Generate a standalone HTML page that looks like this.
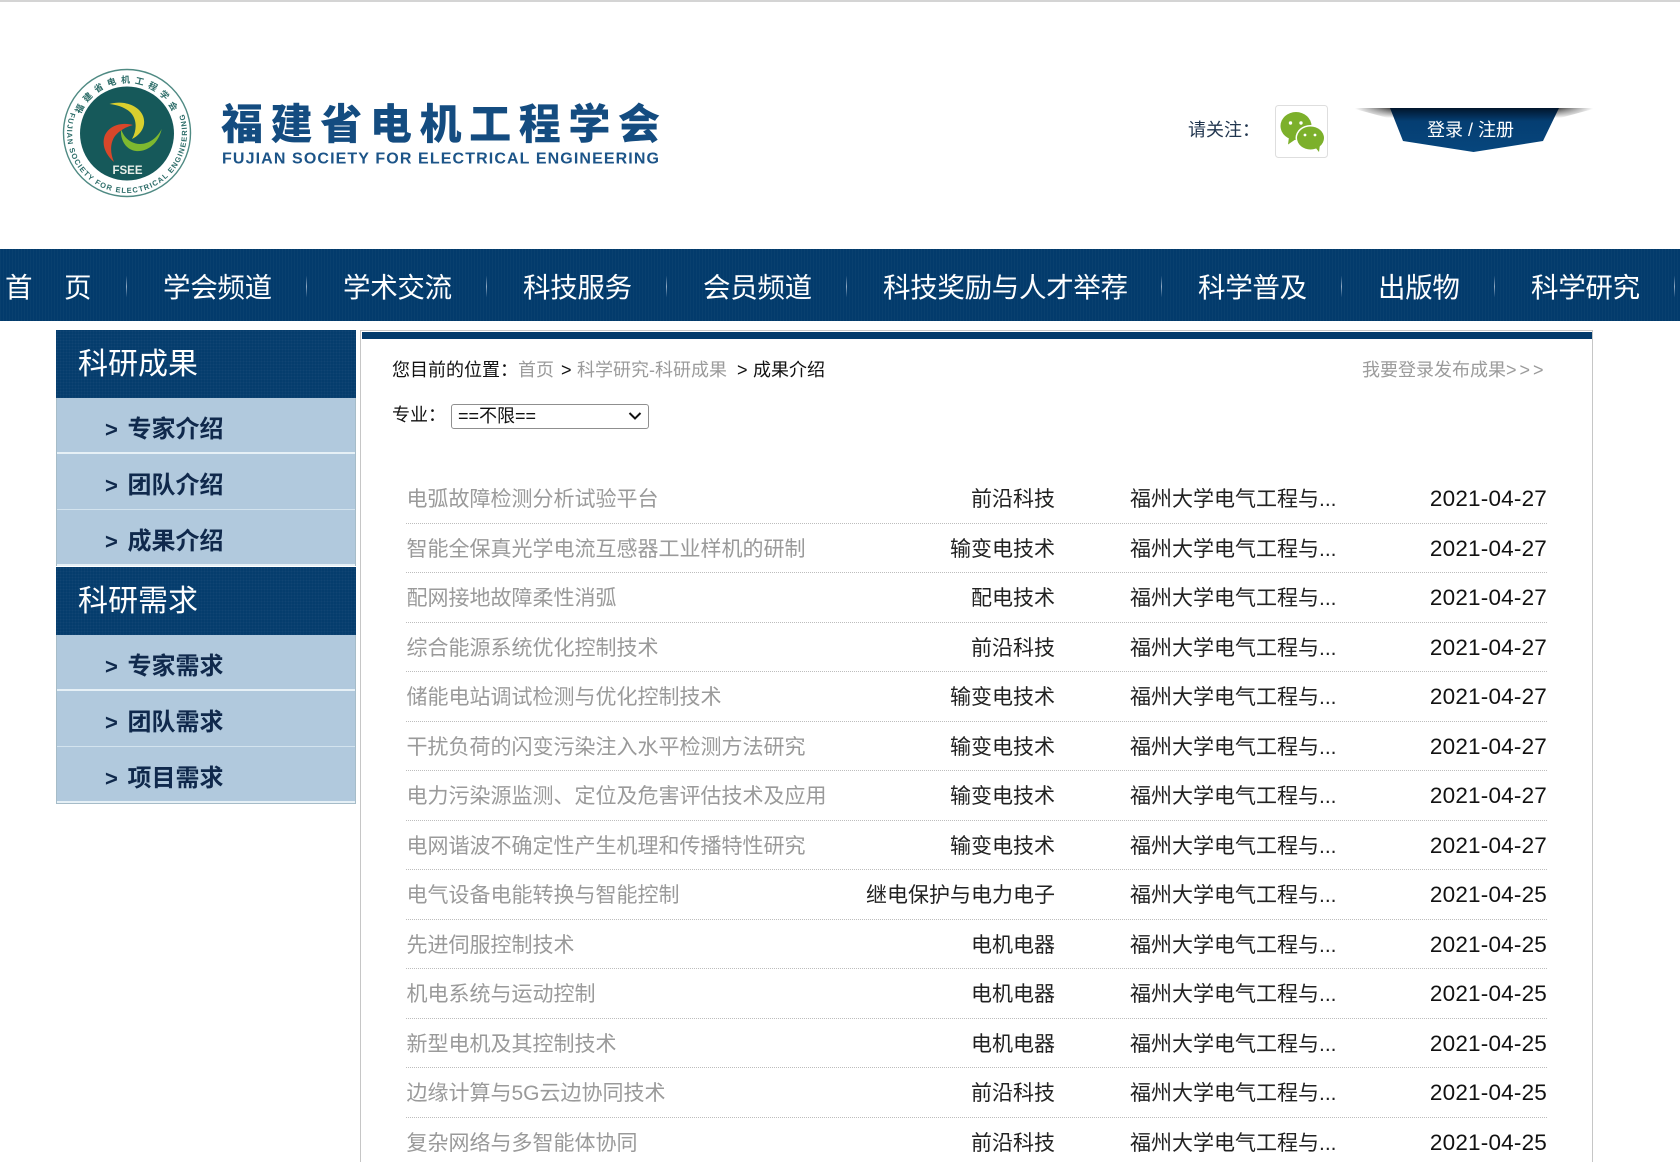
<!DOCTYPE html>
<html lang="zh-CN"><head><meta charset="utf-8"><title>成果介绍</title>
<style>
html,body{margin:0;padding:0;background:#fff;width:1680px;height:1162px;overflow:hidden}
#wrap{position:relative;width:1680px;height:1162px;overflow:hidden;font-family:"Liberation Sans","Noto Sans CJK SC",sans-serif;color:#111}
.a{position:absolute;white-space:nowrap}
#top{left:0;top:0;width:1680px;height:2px;background:#d4d4d4}
#nav{left:0;top:249px;width:1680px;height:72px;background:#033b6c;background-image:repeating-linear-gradient(90deg,rgba(255,255,255,.025) 0 1px,transparent 1px 3px)}
.n{position:absolute;top:0;line-height:72px;font-size:27.5px;color:#fff;white-space:nowrap;font-family:"Noto Sans CJK SC",sans-serif;letter-spacing:-.3px}
.s{position:absolute;top:26px;width:1px;height:23px;background:linear-gradient(#033b6c,#8fa9c2 50%,#033b6c)}
.h{left:56px;width:300px;height:68px;background:#033b6c;background-image:radial-gradient(rgba(255,255,255,.05) 1px,transparent 1.2px);background-size:3px 3px;color:#fff;font-size:30px;line-height:62px;text-indent:22px;font-family:"Noto Sans CJK SC",sans-serif}
.g{left:56px;width:298px;border:1px solid #a6bcc8;border-top:0;background:#b1c9dd}
.i{height:54px;border-bottom:2px solid #e6f0f6;position:relative;font-size:24px;font-weight:bold;line-height:58px;color:#10294c;font-family:"Noto Sans CJK SC",sans-serif}
.i.m{border-bottom-width:1px;height:55px;border-color:#d3e3ee}
.i b{position:absolute;left:48px;top:3px;font-family:"Liberation Sans";font-size:22px}
.i span{position:absolute;left:70.5px}
#panel{left:360px;top:330px;width:1231px;height:832px;border:1px solid #c6c6c6;border-width:1px 1px 0 1px}
#bar{left:362px;top:332px;width:1230px;height:7px;background:#033b6c}
.t{font-size:18px;line-height:24px;font-family:"Liberation Sans","Noto Sans CJK SC",sans-serif;color:#111}
.gy{color:#9b9b9b}
#sel{position:absolute;left:451px;top:404px;width:198px;height:25px;box-sizing:border-box;font:18px/23px "Liberation Sans","Noto Sans CJK SC",sans-serif;color:#111;background:#fff;border:1px solid #8f8f8f;border-radius:3px;padding:0 0 0 6px;margin:0;appearance:none;-webkit-appearance:none}
#rows{left:406px;top:474px;width:1141px;height:688px;overflow:hidden}
.r{position:relative;height:48.5px;border-bottom:1px dotted #bdbdbd;font-size:21px;line-height:48px;color:#222}
.r i{font-style:normal;position:absolute;top:2px;white-space:nowrap}
.r .c1{left:.5px;color:#9a9a9a}
.r .c2{right:492px}
.r .c3{left:724px}
.r .c4{right:0;top:1px;font-size:22.5px;letter-spacing:.2px;font-family:"Liberation Sans",sans-serif;color:#111}
</style></head><body><div id="wrap">
<div id="top" class="a"></div>

<svg class="a" style="left:0;top:0" width="1680" height="240" viewBox="0 0 1680 240" xmlns="http://www.w3.org/2000/svg">
<defs>
<path id="arcB" d="M70.6,112.5 A60,60 0 1 0 183.4,112.5"/>
<path id="arcT" d="M80.6,114.3 A50,50 0 0 1 173.4,114.3"/>
<linearGradient id="sh" x1="0" y1="0" x2="0" y2="1"><stop offset="0" stop-color="#000" stop-opacity=".75"/><stop offset="1" stop-color="#000" stop-opacity="0"/></linearGradient>
<linearGradient id="shL" x1="0" y1="0" x2="1" y2="0"><stop offset="0" stop-color="#fff"/><stop offset="1" stop-color="#fff" stop-opacity="0"/></linearGradient>
<linearGradient id="shR" x1="1" y1="0" x2="0" y2="0"><stop offset="0" stop-color="#fff"/><stop offset="1" stop-color="#fff" stop-opacity="0"/></linearGradient>
<linearGradient id="ban" x1="0" y1="0" x2="0" y2="1"><stop offset="0" stop-color="#01152b"/><stop offset=".3" stop-color="#053e72"/><stop offset="1" stop-color="#06467d"/></linearGradient>
</defs>
<g style="filter:blur(.35px)">
<circle cx="127" cy="133" r="63.5" fill="#fff" stroke="#4f8a83" stroke-width="1.4"/>
<circle cx="127" cy="133.500" r="47" fill="#16595a"/>
<text font-family="Noto Sans CJK SC,sans-serif" font-size="9" font-weight="700" fill="#2c6c68"><textPath href="#arcT" textLength="116" lengthAdjust="spacing">福建省电机工程学会</textPath></text>
<text font-family="Liberation Sans,sans-serif" font-size="7.5" font-weight="700" fill="#2c6c68"><textPath href="#arcB" textLength="228" lengthAdjust="spacing">FUJIAN SOCIETY FOR ELECTRICAL ENGINEERING</textPath></text>
<path d="M109.5,104 C126,99 146,108 144,124 C143,131 138,136 132,139 C137,130 137,120 131,113 C125,107 117,105 109.5,104Z" fill="#d9cf2e"/>
<path d="M161.7,129 C158,145 146,152 136,151 C126,150 120,140 121,129 C124,138 131,144 140,144 C149,144 157,138 161.7,129Z" fill="#7eb92f"/>
<path d="M133,125 C122,122 110,125 105,135 C101,145 106,155 114,162 C110,153 110,143 115,136 C120,130 126,127 133,125Z" fill="#d8472a"/>
<text x="127.5" y="174" text-anchor="middle" font-family="Liberation Sans,sans-serif" font-size="11.5" font-weight="700" fill="#e8efe9">FSEE</text>
<text x="221" y="139" font-family="Noto Sans CJK SC,sans-serif" font-size="42" font-weight="900" fill="#144c80" textLength="439" lengthAdjust="spacing">福建省电机工程学会</text>
<text x="222" y="163.5" font-family="Liberation Sans,sans-serif" font-size="16" font-weight="700" fill="#1c5488" textLength="437" lengthAdjust="spacing">FUJIAN SOCIETY FOR ELECTRICAL ENGINEERING</text>
</g>

<rect x="1275.5" y="105.5" width="52" height="52" rx="3" fill="#fff" stroke="#dedede"/>
<path d="M1289,137 L1288,144.500 L1296,139Z" fill="#7cb02b"/>
<ellipse cx="1296" cy="126" rx="15.500" ry="14" fill="#7cb02b"/>
<ellipse cx="1310.500" cy="138" rx="15" ry="13" fill="#fff"/>
<ellipse cx="1310.500" cy="138" rx="13.500" ry="11.500" fill="#7cb02b"/>
<path d="M1315,147 L1319,152 L1320,144Z" fill="#7cb02b"/>
<circle cx="1290.500" cy="123" r="1.700" fill="#fff"/><circle cx="1301" cy="123" r="1.700" fill="#fff"/>
<circle cx="1305" cy="135" r="1.400" fill="#fff"/><circle cx="1315" cy="135" r="1.400" fill="#fff"/>

<path d="M1355,108 H1593 V109 L1560,118 H1388 L1355,109Z" fill="url(#sh)"/>
<rect x="1355" y="108" width="36" height="12" fill="url(#shL)"/>
<rect x="1557" y="108" width="36" height="12" fill="url(#shR)"/>
<path d="M1390,108 H1559 L1543,141 L1473.500,152 L1403,141Z" fill="url(#ban)"/>
</svg>

<div class="a t" style="left:1188px;top:118px;color:#21364f">请关注：</div>
<div class="a t" style="left:1427px;top:118px;color:#fff">登录<span style="font-family:'Liberation Sans'"> / </span>注册</div>

<div id="nav" class="a">
<span class="n" style="left:5px">首</span><span class="n" style="left:64px">页</span>
<span class="s" style="left:126px"></span>
<span class="n" style="left:163px">学会频道</span>
<span class="s" style="left:306px"></span>
<span class="n" style="left:343px">学术交流</span>
<span class="s" style="left:486px"></span>
<span class="n" style="left:523px">科技服务</span>
<span class="s" style="left:666px"></span>
<span class="n" style="left:703px">会员频道</span>
<span class="s" style="left:846px"></span>
<span class="n" style="left:883px">科技奖励与人才举荐</span>
<span class="s" style="left:1161px"></span>
<span class="n" style="left:1198px">科学普及</span>
<span class="s" style="left:1341px"></span>
<span class="n" style="left:1378px">出版物</span>
<span class="s" style="left:1494px"></span>
<span class="n" style="left:1531px">科学研究</span>
<span class="s" style="left:1674px"></span>
</div>

<div class="a h" style="top:330px">科研成果</div>
<div class="a g" style="top:398px;height:167px">
<div class="i"><b>&gt;</b><span>专家介绍</span></div>
<div class="i m"><b>&gt;</b><span>团队介绍</span></div>
<div class="i"><b>&gt;</b><span>成果介绍</span></div>
</div>
<div class="a h" style="top:567px">科研需求</div>
<div class="a g" style="top:635px;height:168px">
<div class="i"><b>&gt;</b><span>专家需求</span></div>
<div class="i m"><b>&gt;</b><span>团队需求</span></div>
<div class="i"><b>&gt;</b><span>项目需求</span></div>
</div>

<div id="panel" class="a"></div>
<div id="bar" class="a"></div>

<div class="a t" style="left:392px;top:358px">您目前的位置：</div>
<div class="a t gy" style="left:518px;top:358px">首页</div>
<div class="a t" style="left:561px;top:358px">&gt;</div>
<div class="a t gy" style="left:577px;top:358px">科学研究-科研成果</div>
<div class="a t" style="left:737px;top:358px">&gt;</div>
<div class="a t" style="left:753px;top:358px">成果介绍</div>
<div class="a t gy" style="left:1362px;top:358px">我要登录发布成果<span style="letter-spacing:3px">&gt;&gt;&gt;</span></div>
<div class="a t" style="left:392px;top:403px">专业：</div>
<select id="sel"><option>==不限==</option></select>
<svg class="a" style="left:628px;top:411px" width="14" height="10" viewBox="0 0 14 10" xmlns="http://www.w3.org/2000/svg"><path d="M1.500,2 L7,7.500 L12.500,2" fill="none" stroke="#111" stroke-width="2"/></svg>

<div id="rows" class="a">
<div class="r"><i class="c1">电弧故障检测分析试验平台</i><i class="c2">前沿科技</i><i class="c3">福州大学电气工程与...</i><i class="c4">2021-04-27</i></div>
<div class="r"><i class="c1">智能全保真光学电流互感器工业样机的研制</i><i class="c2">输变电技术</i><i class="c3">福州大学电气工程与...</i><i class="c4">2021-04-27</i></div>
<div class="r"><i class="c1">配网接地故障柔性消弧</i><i class="c2">配电技术</i><i class="c3">福州大学电气工程与...</i><i class="c4">2021-04-27</i></div>
<div class="r"><i class="c1">综合能源系统优化控制技术</i><i class="c2">前沿科技</i><i class="c3">福州大学电气工程与...</i><i class="c4">2021-04-27</i></div>
<div class="r"><i class="c1">储能电站调试检测与优化控制技术</i><i class="c2">输变电技术</i><i class="c3">福州大学电气工程与...</i><i class="c4">2021-04-27</i></div>
<div class="r"><i class="c1">干扰负荷的闪变污染注入水平检测方法研究</i><i class="c2">输变电技术</i><i class="c3">福州大学电气工程与...</i><i class="c4">2021-04-27</i></div>
<div class="r"><i class="c1">电力污染源监测、定位及危害评估技术及应用</i><i class="c2">输变电技术</i><i class="c3">福州大学电气工程与...</i><i class="c4">2021-04-27</i></div>
<div class="r"><i class="c1">电网谐波不确定性产生机理和传播特性研究</i><i class="c2">输变电技术</i><i class="c3">福州大学电气工程与...</i><i class="c4">2021-04-27</i></div>
<div class="r"><i class="c1">电气设备电能转换与智能控制</i><i class="c2">继电保护与电力电子</i><i class="c3">福州大学电气工程与...</i><i class="c4">2021-04-25</i></div>
<div class="r"><i class="c1">先进伺服控制技术</i><i class="c2">电机电器</i><i class="c3">福州大学电气工程与...</i><i class="c4">2021-04-25</i></div>
<div class="r"><i class="c1">机电系统与运动控制</i><i class="c2">电机电器</i><i class="c3">福州大学电气工程与...</i><i class="c4">2021-04-25</i></div>
<div class="r"><i class="c1">新型电机及其控制技术</i><i class="c2">电机电器</i><i class="c3">福州大学电气工程与...</i><i class="c4">2021-04-25</i></div>
<div class="r"><i class="c1">边缘计算与5G云边协同技术</i><i class="c2">前沿科技</i><i class="c3">福州大学电气工程与...</i><i class="c4">2021-04-25</i></div>
<div class="r"><i class="c1">复杂网络与多智能体协同</i><i class="c2">前沿科技</i><i class="c3">福州大学电气工程与...</i><i class="c4">2021-04-25</i></div>
</div>
</div></body></html>
